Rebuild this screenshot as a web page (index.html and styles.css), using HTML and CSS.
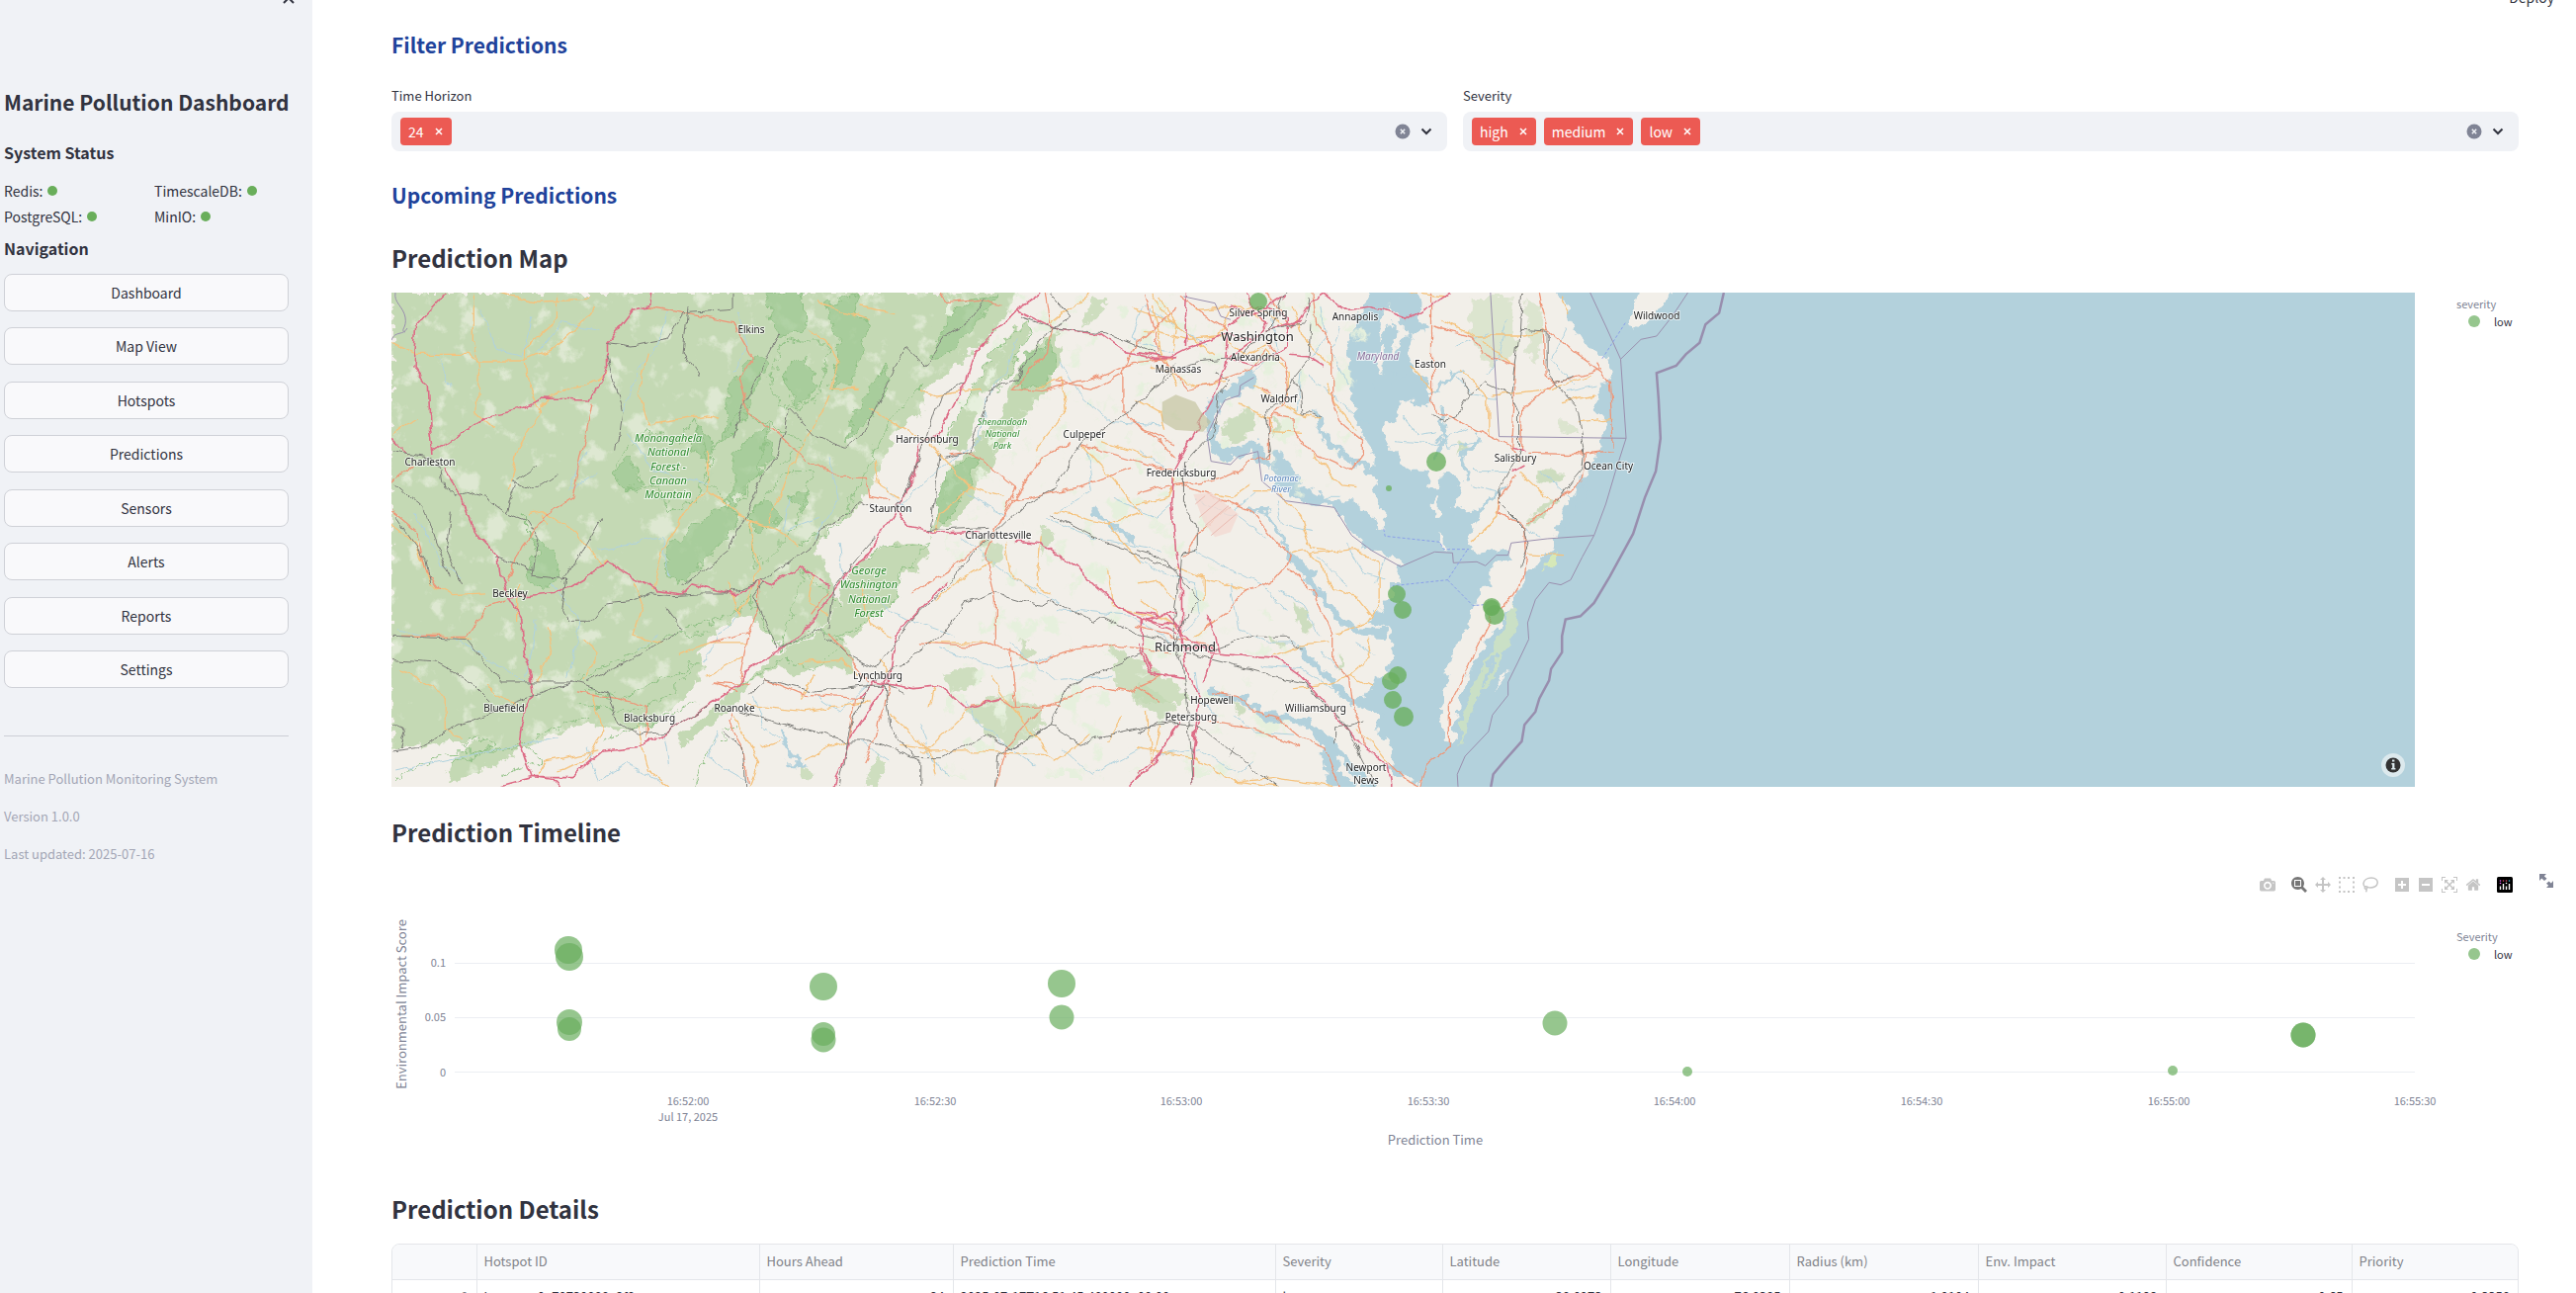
FILE: index.html
```html
<!DOCTYPE html>
<html lang="en">
<head>
<meta charset="utf-8">
<title>Marine Pollution Dashboard</title>
<link rel="stylesheet" href="styles.css">
</head>
<body>
<div class="app">
  <aside class="sidebar">
    <button class="close" aria-label="Close sidebar"><svg viewBox="0 0 12 12" width="12" height="12"><path d="M1 1l10 10M11 1L1 11"/></svg></button>
    <h1>Marine Pollution Dashboard</h1>
    <h2>System Status</h2>
    <div class="status">
      <span>Redis:<i class="dot"></i></span><span>TimescaleDB:<i class="dot"></i></span>
      <span>PostgreSQL:<i class="dot"></i></span><span>MinIO:<i class="dot"></i></span>
    </div>
    <h2 class="nav-title">Navigation</h2>
    <nav class="nav">
      <button>Dashboard</button>
      <button>Map View</button>
      <button>Hotspots</button>
      <button>Predictions</button>
      <button>Sensors</button>
      <button>Alerts</button>
      <button>Reports</button>
      <button>Settings</button>
    </nav>
    <hr>
    <footer class="about">
      <p>Marine Pollution Monitoring System</p>
      <p>Version 1.0.0</p>
      <p>Last updated: 2025-07-16</p>
    </footer>
  </aside>

  <main class="main">
    <button class="deploy">Deploy</button>
    <h3 class="section">Filter Predictions</h3>
    <div class="filters">
      <div class="field">
        <label for="horizon">Time Horizon</label>
        <div class="select">
          <span class="tag">24<button aria-label="Remove 24"><svg viewBox="0 0 8 8" width="8" height="8"><path d="M1 1l6 6M7 1L1 7"/></svg></button></span>
          <input id="horizon" type="text">
          <button class="clear" aria-label="Clear all"><svg viewBox="0 0 16 16" width="16" height="16"><circle cx="8" cy="8" r="7.5"/><path d="M5.8 5.8l4.4 4.4M10.2 5.8l-4.4 4.4"/></svg></button>
          <button class="open" aria-label="Open"><svg viewBox="0 0 12 8" width="12" height="8"><path d="M1.500 1.500l4.500 4.500 4.500-4.500"/></svg></button>
        </div>
      </div>
      <div class="field">
        <label for="severity">Severity</label>
        <div class="select">
          <span class="tag">high<button aria-label="Remove high"><svg viewBox="0 0 8 8" width="8" height="8"><path d="M1 1l6 6M7 1L1 7"/></svg></button></span>
          <span class="tag">medium<button aria-label="Remove medium"><svg viewBox="0 0 8 8" width="8" height="8"><path d="M1 1l6 6M7 1L1 7"/></svg></button></span>
          <span class="tag">low<button aria-label="Remove low"><svg viewBox="0 0 8 8" width="8" height="8"><path d="M1 1l6 6M7 1L1 7"/></svg></button></span>
          <input id="severity" type="text">
          <button class="clear" aria-label="Clear all"><svg viewBox="0 0 16 16" width="16" height="16"><circle cx="8" cy="8" r="7.5"/><path d="M5.8 5.8l4.4 4.4M10.2 5.8l-4.4 4.4"/></svg></button>
          <button class="open" aria-label="Open"><svg viewBox="0 0 12 8" width="12" height="8"><path d="M1.500 1.500l4.500 4.500 4.500-4.500"/></svg></button>
        </div>
      </div>
    </div>
    <h3 class="section upcoming">Upcoming Predictions</h3>

    <h2 class="title">Prediction Map</h2>
    <div class="map-row">
      <div class="map">
        <svg viewBox="0 0 2047 500" width="100%" height="500" preserveAspectRatio="xMinYMin slice">
          <defs>
            <filter id="rough" x="0" y="0" width="100%" height="100%"><feTurbulence type="fractalNoise" baseFrequency=".09" numOctaves="3" seed="4"/><feDisplacementMap in="SourceGraphic" scale="16" xChannelSelector="R" yChannelSelector="G"/></filter>
            <filter id="wiggle" x="0" y="0" width="100%" height="100%"><feTurbulence type="fractalNoise" baseFrequency=".06" numOctaves="3" seed="9"/><feDisplacementMap in="SourceGraphic" scale="9" xChannelSelector="R" yChannelSelector="G"/></filter>
            <filter id="speck" x="0" y="0" width="100%" height="100%"><feTurbulence type="fractalNoise" baseFrequency=".021 .013" numOctaves="6" seed="31"/><feColorMatrix values="0 0 0 0 .93  0 0 0 0 .94  0 0 0 0 .86  7 0 0 0 -4.1"/></filter>
            <filter id="woods" x="0" y="0" width="100%" height="100%"><feTurbulence type="fractalNoise" baseFrequency=".04 .04" numOctaves="5" seed="12"/><feColorMatrix values="0 0 0 0 .79  0 0 0 0 .87  0 0 0 0 .72  9 0 0 0 -5.6"/></filter>
            <path id="forestShape" d="M12 18H1250L1235 80 1190 160 1120 250 1070 310 1062 390 1015 425 1000 480 975 560 955 620 940 660 920 700 880 730 850 785 875 850 885 900 900 960 870 1030 790 1100 740 1030 715 990 650 1050 620 1110 635 1150 605 1230 560 1290 500 1345 430 1330 380 1330 300 1385 240 1430 160 1490 120 1500 130 1440 180 1380 120 1380 60 1400 12 1400Z"/>
            <clipPath id="forestClip"><use href="#forestShape"/></clipPath>
          </defs>
          <rect width="2047" height="500" fill="#b3d1dc"/>
          <g filter="url(#rough)">
            <rect x="-20" y="-20" width="860" height="540" fill="#f2efe9"/>
            <g transform="translate(754 -6) scale(.3954 .3333)" fill="#f2efe9">
              <path d="M-40-20H600L600 18 570 60 560 100 562 130 545 165 540 200 545 260 550 340 555 400 575 440 605 490 600 540 595 570 610 580 608 620 618 660 638 700 632 745 600 700 560 660 480 640 420 600 400 550 370 510 345 500 350 600 420 655 505 670 545 740 590 790 640 810 675 850 670 900 650 900 650 940 620 990 590 1020 650 1040 652 1060 655 1130 640 1160 650 1205 610 1180 600 1230 560 1250 610 1290 620 1350 655 1400 650 1470 720 1510 740 1560-40 1560Z"/>
              <path d="M640 60L665 80 690 150 655 200 660 100 620 170 625 100ZM605 220L635 180 630 270Z"/>
              <path d="M725-20L720 90 755 130 700 150 690 190 700 240 745 280 758 330 745 355 700 350 675 345 665 390 635 430 640 480 670 520 700 560 735 560 755 610 775 610 785 565 805 560 835 590 820 640 810 665 840 685 880 680 860 740 850 790 880 812 930 800 960 800 950 830 910 835 900 900 865 950 850 1030 820 1080 800 1150 785 1230 780 1300 788 1370 808 1400 815 1330 822 1260 860 1150 910 1050 950 990 975 930 1000 880 1040 820 1060 790 1080 730 1100 660 1130 600 1160 540 1190 480 1205 420 1170 370 1190 290 1215 280 1210 220 1150 180 1110 110 1095 50 1050-20Z"/>
              <path d="M1290-20H1380L1370 18 1330 80 1280 125 1260 120 1275 60Z"/>
              <path d="M762 640l10 0 3 60-10-5zM930 1180l-20 60 35-70zM770 750l15 10 3 50-14-16z"/>
              <path d="M960 960L972 1010 962 1060 900 1210 880 1230 930 1100 905 1130 850 1330 828 1390 830 1310 870 1190 940 1040Z" fill="#cfe4c0" opacity=".8"/>
              <path d="M1060 820L1080 800 1070 850 1040 850Z" fill="#d6e8b8"/>
            </g>
            <g transform="translate(-6 -6) scale(.5102 .3333)" fill="#c4d9b4">
              <use href="#forestShape"/>
              <path d="M1265 100L1280 130 1240 260 1180 330 1150 500 1105 500 1130 400 1160 320 1190 230ZM1330 130L1340 200 1320 300 1270 390 1240 440 1200 540 1170 620 1140 700 1080 755 1100 640 1110 560 1160 500 1230 360 1250 260 1280 200ZM1070 780L1080 810 1050 860 1020 880 1010 960 960 1010 930 1060 900 1070 870 1040 900 960 905 900 970 800 1020 775ZM870 1040L910 1070 930 1170 870 1150 810 1180 780 1160 720 1200 700 1260 640 1330 590 1395 580 1360 620 1320 700 1210 780 1110Z"/>
              <path d="M1160 1150L1190 1200 1120 1230 1110 1180ZM1240 1230L1300 1280 1310 1330 1240 1400 1190 1360 1150 1280 1200 1250ZM1440 1090L1510 1150 1560 1200 1600 1260 1500 1260 1450 1210ZM1260 1070L1290 1110 1270 1140ZM1180 760L1230 790 1220 850 1190 840ZM1300 720L1330 740 1300 820ZM1400 30L1430 50 1380 130ZM975 1420L990 1440 980 1518 950 1518ZM820 1440L850 1480 830 1500Z" opacity=".8"/>
            </g>
            <g transform="translate(754 -6) scale(.3954 .3333)" fill="#c4d9b4" opacity=".8">
              <path d="M210 430L290 370 300 430 240 480ZM350 400L370 420 350 460ZM400 960L430 980 450 1040 420 1050ZM1020 560L1090 560 1080 595 1030 590ZM0 1200L60 1230 100 1280 60 1310 0 1260ZM250 1260L280 1280 260 1310ZM340 1060L390 1080 370 1110ZM510 1120L530 1140 515 1160ZM830 470L850 490 820 510ZM1000 700L1080 640 1070 670 1000 730Z"/>
              <path d="M860 30L960 30 970 200 900 240 850 140ZM990 40L1040 60 1030 240 1000 200ZM1080 390L1130 440 1090 450Z" opacity=".6"/>
            </g>
            <rect x="560" width="740" height="490" filter="url(#woods)" clip-path="polygon(0 0,62% 0,55% 35%,50% 45%,40% 30%,35% 45%,48% 75%,46% 100%,0 100%)"/>
            <g transform="translate(754 -6) scale(.3954 .3333)" class="river">
              <path d="M330 540C300 500 310 480 300 480S250 520 215 500 190 430 190 380 240 330 300 270" stroke-width="10"/>
              <path d="M630 1050L560 1045 500 980 450 900 390 810" stroke-width="8"/>
              <path d="M390 810L360 740 340 690 280 665" stroke-width="4"/>
              <path d="M620 1290L540 1250 480 1180 420 1100" stroke-width="7"/>
              <path d="M600 1518L520 1420 480 1370 430 1320 390 1310 340 1310 280 1260 200 1230" stroke-width="8"/>
              <path d="M600 560L540 520 480 460 460 380" stroke-width="6"/>
              <path d="M540 1518L500 1480 490 1380" stroke-width="14"/>
              <path d="M850 590L830 520 870 460M760 330L800 280 830 260M780 380L790 450 760 520M950 600L900 640 870 700M1200 500L1130 660 1060 800" stroke-width="4"/>
              <path d="M650 300L610 300M700 280L650 250" stroke-width="5"/>
            </g>
            <g transform="translate(-6 -6) scale(.5102 .3333)" class="river">
              <path d="M780 1350L800 1400 830 1450 800 1450M1400 680L1450 730 1480 770" stroke-width="4"/>
            </g>
          </g>
          <g transform="translate(-6 -6) scale(.5102 .3333)" clip-path="url(#forestClip)"><rect x="0" y="0" width="1300" height="1518" filter="url(#speck)" opacity=".5"/></g>

          <g filter="url(#rough)">
            <g transform="translate(-6 -6) scale(.5102 .3333)" class="park">
              <path class="parkfill" d="M755 18L830 18 835 120 790 150 760 100ZM870 60L940 20 930 90 960 100 930 280 885 310 900 160ZM740 200L760 240 720 340 700 440 670 460 680 300ZM1160 40L1210 30 1180 100 1110 210 1080 220 1120 90ZM990 240L1000 300 950 420 915 470 930 380ZM560 790L620 720 690 640 700 720 640 820 590 900 555 870ZM1270 210L1320 170 1330 260 1290 310 1250 300ZM1110 560L1170 520 1160 600 1110 720 1090 700ZM270 690L290 760 330 800 350 880 310 920 280 880 300 800ZM620 420L650 480 640 520 610 500ZM450 570L480 520 510 600 480 620ZM690 500L750 420 770 520 720 600 690 650ZM790 260L830 210 860 300 810 370ZM720 700L750 640 790 700 740 740ZM800 640L840 620 830 680Z"/>
              <path d="M640 520L700 380 760 420 740 560 690 680 640 600ZM470 500L450 570 480 620 540 600 560 680 620 640 640 540 610 400 580 470 520 440ZM790 160L880 180 860 330 800 380 760 300ZM720 700L800 560 850 560 810 740 730 860ZM760 420L830 470 790 540M820 780L900 730 1000 400 1062 300M1100 480L1190 230 1270 100 1280 140 1210 330M900 900L980 790 1080 780 1020 880 1010 960 900 1070M590 1040L700 990 720 940 780 1100 860 1040 910 1080M380 1190L560 1060 640 1050M400 1220L470 1250 620 1140 560 1240 480 1290 380 1270M20 1490L120 1420 250 1400 400 1300M130 1440L220 1410 290 1400 310 1440 230 1480M150 1390L200 1370 220 1390 180 1420ZM700 1210L800 1130 850 1170 900 1090M780 1100L830 860 900 960M430 1380L560 1300 620 1260M610 1518L640 1400 690 1330"/>
            </g>
          </g>

          <g filter="url(#wiggle)">
            <g transform="translate(-6 -6) scale(.5102 .3333)" class="stream">
              <path d="M190 70L220 190 270 210 290 90M560 70L540 180 500 250M100 200L130 300M700 80L720 180 690 260M420 130L350 110 300 200M60 690L110 840 150 880M400 500L360 620 420 560M480 440L530 560 640 600M500 260L470 380M130 1060L280 1200 300 1010M330 900L390 1020 360 1180M420 800L550 760 560 880M700 990L650 1080 630 1140M800 640L790 740 860 700M880 520L900 640 850 760M1250 160L1230 260 1190 340 1180 460 1060 600 1010 680M1340 230L1380 330 1440 410 1540 420M1390 500L1400 620 1340 680M1500 60L1480 160 1560 200M990 600L1040 690M1140 620L1230 700M1310 700L1400 760 1540 800M900 780L910 900M960 940L1020 1000 1130 1060M1140 760L1240 880 1340 960M1330 980L1480 1000 1560 1080M1100 1100L1220 1160 1320 1120M1240 1080L1330 1200 1440 1180M730 1240L750 1340 800 1390M850 1240L900 1290 960 1200M400 1400L420 1500 480 1450 540 1500M550 1360L560 1450M1060 1330L1080 1440 1120 1480M1150 1260L1180 1330 1290 1460M1340 1400L1400 1480 1500 1400M660 1350L640 1430 720 1500M940 1380L1000 1440M20 1470L140 1430 240 1400 340 1370M20 1040L80 1060M500 1100L540 1060M1440 640L1530 700 1560 660"/>
            </g>
            <g transform="translate(754 -6) scale(.3954 .3333)" class="stream">
              <path d="M20 60L100 120 180 180M340 60L360 190 300 260M470 60L480 160 440 220M420 260L410 380M440 270L530 360 590 420M520 120L500 200 540 300M680 390L720 450 760 440M660 470L760 480 840 430M780 410L800 490 880 470M860 560L950 560M850 600L920 620M800 250L860 330 920 340M950 100L930 200 890 270M1100 130L1060 220 1120 300M1180 300L1100 320M820 180L900 140M150 650L260 700 330 760M10 830L70 870 150 900 160 1000 90 1080M140 800L240 860 320 900 380 980M240 900L260 1040 340 1080 410 1080M360 920L420 960 470 1060M320 1150L420 1160 500 1220M150 1170L160 1260 210 1300M60 1420L160 1400 260 1480 300 1440M250 1300L300 1350 400 1360M470 1110L540 1180M560 1080L610 1120M440 640L520 640M360 650L370 720 450 740M540 780L580 870 640 890M460 820L540 910M1030 560L1110 640M960 700L1030 760M640 820L610 900M10 500L80 560M250 680L310 620"/>
            </g>
            <g transform="translate(-6 -6) scale(.5102 .3333)" fill="none">
              <path class="minor" d="M175 18L175 160 185 260 180 380 215 430M340 18L340 100 275 190 280 280 305 380 260 500 245 620M12 170L60 205 165 205 180 225 275 225 330 190 390 110 415 60M220 18L300 45 410 40M12 450L60 400M300 380L340 320 410 290 440 260M520 200L500 330 520 420 640 390 660 400M640 500L640 620 590 690 550 800 530 920M280 690L310 680 380 750 430 850 440 830M310 690L320 720M12 720L60 780 90 900 130 935 200 930M30 1060L120 1060 170 1070M390 1070L420 1110 390 1200M490 890L510 960 490 1060 550 1080M320 1030L330 1100 300 1200M260 900L260 1020M640 620L720 710 780 740 820 780M720 710L740 860 700 1000 680 900M840 130L870 160 900 230 880 310 940 310M880 330L810 540 800 560 760 720M960 100L870 60 860 40M940 60L1010 80M1060 310L1090 330 1180 310M960 370L1020 430 1090 470M1080 480L1160 610 1230 640M1020 640L980 600 970 520M1290 310L1340 280 1350 380 1290 490M1160 610L1100 690 1090 750M1420 470L1520 520M1380 480L1440 580 1500 690 1430 720M1330 680L1430 720 1500 840M1300 760L1290 910 1320 930M1230 770L1240 870 1290 930M1430 860L1440 970 1520 1000M1200 830L1130 900 1090 950M940 900L960 1020 1000 1060M850 870L840 960 880 1000M720 1080L640 1080 580 1120M640 1180L710 1120M820 1140L900 1130 940 1180M980 1130L1000 1180M850 1180L820 1250M720 1270L830 1290 960 1260M690 1300L740 1440 720 1518M780 1380L740 1400M410 1230L430 1350 400 1440 340 1470M1060 1410L1180 1410 1300 1420 1330 1440 1400 1360M1000 1300L1080 1410 1090 1480M1160 1280L1080 1400 1020 1390M1200 1180L1230 1250 1290 1370 1310 1420M1460 1300L1430 1380M1510 1290L1520 1450M920 1370L830 1440M300 1490L320 1440 420 1410M500 1330L520 1470 560 1518M1400 18L1360 60 1320 110M1480 60L1560 110M1520 60L1540 200 1568 300M1090 1210L1080 1280M1200 1080L1080 1080M30 1160L120 1240 120 1350 150 1370M200 1210L260 1270"/>
              <path class="second" d="M520 60L590 80 690 110 720 190 730 220 700 280 720 380 780 450 830 520 900 580 955 580 960 640 1000 650M1100 18L1110 50 1180 40 1220 60M410 350L390 500 370 640 320 690 270 790 240 900M12 590L50 540M12 680L60 740 80 860 110 920M1568 60L1490 170 1460 260 1460 380 1500 430 1568 480M1310 18L1320 130 1310 200 1240 310 1300 320 1400 280 1480 230 1560 220M1330 290L1400 310 1460 260M1120 510L1160 500 1250 610 1210 740 1190 820 1210 950 1210 1090M1360 470L1300 520 1240 660 1210 740M1380 480L1560 560M1240 650L1370 610 1480 550M1040 930L1120 860 1190 770M880 920L840 1000M700 1200L720 1050 740 980 740 900M640 1080L720 1050M1000 1210L970 1380 950 1440M960 1200L900 1090 880 1050M700 1230L650 1200 720 1210M380 1230L460 1250 520 1280 520 1370M750 1190L830 1240 950 1250M30 1060L160 1060 200 970 240 950M1060 1080L1170 1090 1200 1080 1290 1140 1370 1100 1450 1090 1560 1110M1160 1270L1220 1250 1250 1280 1340 1270M1410 1210L1470 1230 1540 1180M1210 1518L1230 1400 1300 1280 1410 1210M1250 1280L1240 1100M720 1500L710 1400 680 1320 690 1280M920 1370L930 1250"/>
              <path class="motor" d="M120 18L60 120 55 240 85 300 88 420 96 510M96 500L200 395 260 375 310 342 405 345 440 250 440 170 490 70 520 60 525 18M115 550L150 640 160 680 180 750 225 820 230 880 245 950 270 1010 275 1120 290 1180 295 1240 275 1290 265 1380 290 1490 340 1500 350 1518M220 1518L290 1490 370 1490 430 1410 500 1400 560 1350 640 1270 700 1210 710 1170 780 1110 850 1010 890 920 920 860 950 830 1010 680 1050 570 1060 480 1100 440 1150 290 1170 200 1250 70 1300 18M245 945L350 925 440 840 540 920 590 930 610 900 690 935 740 895 765 910 820 850 880 910M1010 680L1040 730 1090 750 1180 745M1250 770L1300 780 1370 850 1450 970 1568 1050M1250 70L1330 130 1420 145 1470 200 1530 220 1568 215M1000 1200L1010 1060 1110 900M940 1250L970 1200 1050 1220 1100 1210 1150 1280 1220 1250M890 1518L920 1370 1000 1180M1568 1330L1530 1440 1470 1518M1500 1000L1500 1100 1520 1180 1568 1180M1500 1010L1568 990M12 460L45 510"/>
              <path class="rail" d="M12 500L90 520 110 560 115 610 140 640 160 625 200 640 240 685 280 710 300 760 290 880 360 890 350 980 360 1015 410 1015 440 960 500 950 530 930 570 935 620 930 680 930 750 890 850 780 860 740 920 690 940 650 960 660M240 680L260 590 300 550M250 590L290 620 340 570M20 600L80 680 100 780 130 880M20 700L80 830 90 900M130 680L120 800 150 900M12 1130L100 1140 170 1200 210 1260M12 1060L160 1070 230 1200 330 1200 370 1200M12 1410L60 1400 150 1330 260 1260 370 1200 440 1230 460 1320 500 1360 560 1350 640 1270M220 820L290 860M430 700L400 780 350 900M600 60L590 200 620 270M440 170L490 180 560 160 590 80 690 70 690 18M440 210L470 380 460 500M780 140L740 260 700 400 690 460M800 370L850 450 910 490 950 440 1000 280 1030 180 1070 240 1110 150 1160 100 1190 40M590 910L680 800 710 700 740 600 780 500 800 370M750 900L730 940 780 1100 860 1040 910 1110 970 1160 1050 1000 1120 900 1170 800 1210 750 1270 660 1330 610 1380 470 1470 380 1540 290 1568 230M560 980L590 1040 500 1120 400 1200M1010 680L1050 560 1070 470 1100 330 1150 290M1100 510L1080 740M970 760L890 910 880 1030M1070 740L1200 730M1320 690L1420 770 1568 860M970 1200L1100 1060 1150 960 1210 930 1300 970 1320 950 1400 1020 1420 1000 1500 1060 1568 1080M720 1240L750 1190 850 1230 960 1210 1000 1210 1030 1240M960 1210L920 1340 900 1518M990 1210L1000 1340 1050 1430 1100 1430 1190 1360 1240 1400 1320 1330 1380 1390 1420 1365 1520 1330 1568 1325M700 1290L720 1300 850 1350 920 1380 960 1380 1000 1400 1060 1440 1060 1518M1210 1518L1215 1420 1320 1330 1350 1220 1440 1150 1500 1110M670 1350L710 1400 715 1518M1320 18L1360 90 1310 140 1250 280 1200 310 1160 500 1110 520M1260 90L1330 130 1430 140 1540 210M12 1330L40 1350 30 1400"/>
            </g>
            <g transform="translate(754 -6) scale(.3954 .3333)" fill="none">
              <path class="minor" d="M60 30L100 120 90 200M20 130L130 160 230 150M40 240L150 300 230 290M150 70L260 60 330 110M400 60L420 150 500 240M300 300L410 380 470 400M260 350L340 400 350 440 420 445M330 190L390 260 390 330M480 290L510 360 560 430M450 510L520 600 570 605M0 660L80 640 100 580M200 630L240 640 290 600M300 620L360 620 420 700 445 790 520 805 560 800 620 840 620 960 590 1020 510 1050M390 810L430 800 480 860 500 920 560 940 600 1000M0 900L50 890 100 950M170 890L280 920M440 810L520 800M350 1120L410 1090 490 1080M590 1070L600 1130 550 1180 600 1210M10 950L60 1000 120 1050M200 1010L150 1060M0 1400L140 1430 250 1500 360 1518M250 1500L350 1490 510 1518M60 1330L40 1450M400 1220L480 1210 550 1180M560 1340L600 1380 640 1440M700 20L790 30M780 100L870 150 990 150 1050 130M910 330L1060 310 1160 270M1090 350L1170 330M1130 410L1220 400M980 560L1060 650M850 780L920 700 930 640M1000 810L1090 815M1090 30L1110 80M830 250L900 340 900 450M700 240L760 320M880 160L960 240M40 18L80 100 200 210M100 850L170 880 170 950M0 340L60 380 70 440M380 120L300 60 240 90M340 170L280 210 210 150 240 70"/>
              <path class="second" d="M110 30L190 100 230 130M450 18L460 120 500 180 500 340 520 410 580 470 580 510 550 560 440 500 400 440 400 400 350 390M755 20L755 330 765 380 810 400 880 440 950 480 980 530M760 120L860 150 880 200 970 245M970 240L960 500M1030 18L1050 130 1120 200 1190 260 1210 290 1220 500 1150 510 1000 505M1040 130L1045 270 1070 290 1190 250M1070 290L990 370 985 500M970 570L930 640 925 690 990 720 995 820 990 880 960 940 910 1000 870 1090 850 1150 800 1270 800 1400 740 1450 725 1518M1000 720L1060 670 1075 640 1140 590 1150 510M0 420L60 470 100 520M110 600L180 630 290 680 390 820 380 850 350 890 280 920 240 980 170 1040M390 850L450 920 500 1050 500 1130 545 1190 555 1290 575 1350 580 1400M0 1210L60 1260M190 1230L260 1240 300 1290 360 1310 420 1370 480 1400 520 1518M180 1320L300 1340 420 1400M240 670L160 740 120 820M0 630L50 610 110 600 190 590 260 560 290 530 340 520 340 400 390 330 380 230 330 170M50 200L130 310 200 290 290 250 330 190M320 310L340 320M20 30L60 200M330 18L400 120M0 1030L90 1060 200 1100M1190 250L1180 230M640 1440L690 1500 720 1518"/>
              <path class="motor" d="M0 200L80 215 130 185 240 140 300 160 330 110 300 80 280 18M130 18L125 180M240 60L300 90 380 30M230 130L225 215 300 240 390 180 390 90 310 60 230 120M400 120L440 50 480 18 540 70 600 60 690 100 760 50 800 18M390 205L440 210 480 240M300 160L230 220 200 330 130 480 95 560 90 660 100 800 115 900 115 1080 130 1170 160 1250 145 1400 145 1518M0 985L80 1000 120 1060 180 1110 360 1130 420 1180 510 1300 570 1390 640 1450 650 1518M0 1080L30 1170 120 1190M20 1010L110 1030 120 1100M120 1100L200 1100 170 1200M110 1320L60 1420 0 1480M160 1320L140 1420M180 1000L200 1050 210 1110M960 490L990 500M960 560L990 540M420 100L400 110 330 130"/>
              <path class="rail" d="M0 350L60 300 120 240 140 230 260 215 300 170 350 110 380 18M200 260L240 290 210 330 205 400 190 450 150 500 120 540 120 650 155 730 155 800 115 810 110 900 90 1050 120 1150 125 1210 135 1330 145 1518M0 1350L60 1320 150 1330 360 1518M120 1110L220 1140 340 1180 430 1200 480 1270 520 1300 580 1440 610 1518M330 130L430 110 440 30M445 110L440 220 400 280 420 320 425 385 440 380 470 395M400 280L380 340 330 380 345 500 330 520M985 18L980 130 1050 135 1050 260 1130 380 1145 500 1140 550 1070 650M980 130L960 330 980 380 980 500 925 620 930 660 990 730 1000 790 980 850M830 280L850 330 890 290 960 330M850 330L815 400 785 410 755 385M1070 290L1120 270M0 800L60 820 100 870 160 950 120 1010 100 1070M200 1100L290 1060 380 1060 420 1100M510 1390L510 1340 580 1320M240 1420L245 1400"/>
            </g>
          </g>

          <g transform="translate(754 -6) scale(.3954 .3333)" fill="none">
            <path d="M65 350L100 328 150 350 165 380 190 410 170 440 100 435 65 410Z" fill="#bdbd94" opacity=".6"/>
            <path d="M145 630L190 625 260 690 240 745 200 760 170 710Z" fill="#f3d9d2" opacity=".8"/>
            <path d="M150 660l25-25M160 700l55-55M175 725l60-60M190 755l65-65" stroke="#e9b9b0" class="fine"/>
            <path class="border-thin" d="M1160 18L1200 120 1238 220 1252 460 1225 560 1200 660 1170 755 1140 820 1110 890 1085 905 1055 898 1020 950 1000 1020 1003 1070 975 1140 950 1200 950 1240 910 1300 900 1350 840 1425 820 1480 822 1518M1238 220L1290 160 1330 150 1370 90 1410 18M905 18L927 455 1252 460M675 850L762 805 808 808 810 838 870 835 892 847 920 815 950 815 958 778 1050 765 1170 755M300 275L265 300 262 330 225 345 200 400 180 450 190 530 240 540 260 515 310 500 320 590 380 650 505 670 550 755 600 800 675 850M120 30L200 50 215 90 240 100"/>
            <path class="border-thick" d="M1502 18L1490 80 1455 115 1440 170 1405 205 1380 240 1330 262 1335 340 1340 460 1328 560 1300 640 1270 750 1210 880 1170 960 1135 1000 1097 1010 1088 1060 1088 1110 1060 1160 1055 1195 1030 1250 1020 1290 992 1330 985 1380 940 1440 912 1480 906 1518"/>
            <path class="ferry" d="M632 735L635 757 775 775 785 797 850 797M845 800L795 890 655 908M795 890L860 968 890 965M1250 110L1190 220"/>
          </g>
          <path class="border-thin" d="M4 0C2 10 12 14 14 25S8 38 14 40M0 48C4 38 12 44 16 36"/>

          <g class="label">
            <text x="364" y="41">Elkins</text><text x="39" y="175">Charleston</text><text x="120" y="308">Beckley</text>
            <text x="114" y="424">Bluefield</text><text x="261" y="434">Blacksburg</text><text x="347" y="424">Roanoke</text>
            <text x="492" y="391">Lynchburg</text><text x="542" y="152">Harrisonburg</text><text x="505" y="222">Staunton</text>
            <text x="614" y="249">Charlottesville</text><text x="701" y="147">Culpeper</text><text x="796" y="81">Manassas</text>
            <text x="877" y="24">Silver Spring</text><text x="874" y="69">Alexandria</text><text x="898" y="111">Waldorf</text>
            <text x="975" y="28">Annapolis</text><text x="1051" y="76">Easton</text><text x="799" y="186">Fredericksburg</text>
            <text x="1137" y="171">Salisbury</text><text x="1231" y="179">Ocean City</text><text x="1280" y="27">Wildwood</text>
            <text x="830" y="416">Hopewell</text><text x="809" y="433">Petersburg</text><text x="935" y="424">Williamsburg</text>
            <text x="986" y="484">Newport</text><text x="986" y="497">News</text>
            <g class="city"><text x="876" y="49">Washington</text><text x="803" y="363">Richmond</text></g>
            <g class="state"><text x="998" y="68">Maryland</text></g>
            <g class="water"><text x="900" y="191">Potomac</text><text x="900" y="202">River</text></g>
            <g class="forest"><text x="280" y="151">Monongahela</text><text x="280" y="165">National</text><text x="280" y="180">Forest -</text><text x="280" y="194">Canaan</text><text x="280" y="208">Mountain</text>
            <text x="483" y="285">George</text><text x="483" y="299">Washington</text><text x="483" y="314">National</text><text x="483" y="328">Forest</text></g>
            <g class="forest small"><text x="618" y="134">Shenandoah</text><text x="618" y="146">National</text><text x="618" y="158">Park</text></g>
          </g>
          <g class="spot">
            <circle cx="877" cy="9" r="9"/><circle cx="1057" cy="171" r="10"/><circle cx="1009" cy="198" r="3"/>
            <circle cx="1017" cy="305" r="9"/><circle cx="1023" cy="321" r="9"/><circle cx="1113" cy="318" r="9"/><circle cx="1113" cy="319" r="8"/><circle cx="1116" cy="326" r="10"/>
            <circle cx="1018" cy="387" r="9"/><circle cx="1011" cy="393" r="9"/><circle cx="1013" cy="412" r="9"/><circle cx="1024" cy="429" r="10"/>
          </g>
        </svg>
        <button class="info" aria-label="Map attribution"><svg viewBox="0 0 24 24" width="24" height="24"><circle cx="12" cy="12" r="7.5" fill="#333"/><path d="M11 6.5h2.4v2H11zM10.400 10h3v5h1v1.400h-4.200V15h1v-3.600h-.8z" fill="#dce9ed"/></svg></button>
      </div>
      <div class="legend">
        <div class="legend-title">severity</div>
        <div class="legend-item"><i></i>low</div>
      </div>
    </div>

    <h2 class="title timeline">Prediction Timeline</h2>
    <div class="chart">
      <svg class="plot" viewBox="0 0 2152 314" width="100%">
        <path class="grid" d="M64 94.500H2047M64 149.500H2047M64 204.500H2047"/>
        <g class="spot light">
          <circle cx="179" cy="81" r="14"/><circle cx="180" cy="88" r="14"/><circle cx="180" cy="154" r="13"/><circle cx="180" cy="161" r="12"/>
          <circle cx="437" cy="118" r="14"/><circle cx="437" cy="166" r="12"/><circle cx="437" cy="172" r="12.500"/>
          <circle cx="678" cy="115" r="14"/><circle cx="678" cy="149" r="12.500"/><circle cx="1177" cy="155" r="12.500"/>
          <circle cx="1311" cy="204" r="5"/><circle cx="1802" cy="203" r="5"/><circle cx="1934" cy="167" r="12.500"/><circle cx="1934" cy="167" r="12.500"/>
        </g>
        <g class="tick end"><text x="55" y="98">0.1</text><text x="55" y="153">0.05</text><text x="55" y="209">0</text></g>
        <g class="tick">
          <text x="300" y="238">16:52:00</text><text x="300" y="254">Jul 17, 2025</text><text x="550" y="238">16:52:30</text><text x="799" y="238">16:53:00</text><text x="1049" y="238">16:53:30</text>
          <text x="1298" y="238">16:54:00</text><text x="1548" y="238">16:54:30</text><text x="1798" y="238">16:55:00</text><text x="2047" y="238">16:55:30</text>
        </g>
        <g class="axis"><text x="1056" y="278">Prediction Time</text><text transform="translate(15 136) rotate(-90)">Environmental Impact Score</text></g>
      </svg>
      <div class="legend chart-legend">
        <div class="legend-title">Severity</div>
        <div class="legend-item"><i></i>low</div>
      </div>
      <div class="modebar">
        <button aria-label="Download plot"><svg viewBox="0 0 1000 1000"><path transform="matrix(1 0 0 -1 0 850)" d="m500 450c-83 0-150-67-150-150 0-83 67-150 150-150 83 0 150 67 150 150 0 83-67 150-150 150z m400 150h-120c-16 0-34 13-39 29l-31 93c-6 15-23 28-40 28h-340c-16 0-34-13-39-28l-31-94c-6-15-23-28-40-28h-120c-55 0-100-45-100-100v-450c0-55 45-100 100-100h800c55 0 100 45 100 100v450c0 55-45 100-100 100z m-400-550c-138 0-250 112-250 250 0 138 112 250 250 250 138 0 250-112 250-250 0-138-112-250-250-250z m365 380c-19 0-35 16-35 35 0 19 16 35 35 35 19 0 35-16 35-35 0-19-16-35-35-35z"/></svg></button>
        <span class="gap"></span>
        <button class="on" aria-label="Zoom"><svg viewBox="0 0 1000 1000"><path transform="matrix(1 0 0 -1 0 850)" d="m1000-25l-250 251c40 63 63 138 63 218 0 224-182 406-407 406-224 0-406-182-406-406s183-406 407-406c80 0 155 22 218 62l250-250 125 125z m-812 250l0 438 437 0 0-438-437 0z m62 375l313 0 0-312-313 0 0 312z"/></svg></button>
        <button aria-label="Pan"><svg viewBox="0 0 1000 1000"><path transform="matrix(1 0 0 -1 0 850)" d="m1000 350l-187 188 0-125-250 0 0 250 125 0-188 187-187-187 125 0 0-250-250 0 0 125-188-188 186-187 0 125 252 0 0-250-125 0 187-188 188 188-125 0 0 250 250 0 0-126 187 188z"/></svg></button>
        <button aria-label="Box select"><svg viewBox="0 0 16 16"><path d="M0 0h2v2H0zM4.500 0h2v2h-2zM9 0h2v2H9zM14 0h2v2h-2zM0 14h2v2H0zM4.500 14h2v2h-2zM9 14h2v2H9zM14 14h2v2h-2zM0 4.500h2v2H0zM0 9.500h2v2H0zM14 4.500h2v2h-2zM14 9.500h2v2h-2z"/></svg></button>
        <button aria-label="Lasso select"><svg viewBox="0 0 16 16"><path class="stroke" d="M3.200 10.800C1.600 9.800.8 8.300 1 6.500 1.400 3.300 4.800 1 9 1s6.500 2.300 6.200 5.200C14.900 9.300 11.500 11 7.800 11 6 11 4.800 9.600 3.400 9.800 1.800 10.100 1.900 12.200 3.400 12.300 4.800 12.300 5 10.800 4.400 9.900M3.600 12.300C4.300 13 4.300 14 3.400 15.300"/></svg></button>
        <span class="gap"></span>
        <button aria-label="Zoom in"><svg viewBox="-62 0 1000 1000"><path transform="matrix(1 0 0 -1 0 850)" d="m1 787l0-875 875 0 0 875-875 0z m687-500l-187 0 0-187-125 0 0 187-188 0 0 125 188 0 0 187 125 0 0-187 187 0 0-125z"/></svg></button>
        <button aria-label="Zoom out"><svg viewBox="-62 0 1000 1000"><path transform="matrix(1 0 0 -1 0 850)" d="m0 788l0-876 876 0 0 876-876 0z m688-500l-500 0 0 125 500 0 0-125z"/></svg></button>
        <button aria-label="Autoscale"><svg viewBox="0 0 1000 1000"><path transform="matrix(1 0 0 -1 0 850)" d="m250 850l-187 0-63 0 0-62 0-188 63 0 0 188 187 0 0 62z m688 0l-188 0 0-62 188 0 0-188 62 0 0 188 0 62-62 0z m-875-938l0 188-63 0 0-188 0-62 63 0 187 0 0 62-187 0z m875 188l0-188-188 0 0-62 188 0 62 0 0 62 0 188-62 0z m-125 188l-1 0-93-94-156 156 156 156 92-93 2 0 0 250-250 0 0-2 93-92-156-156-156 156 94 92 0 2-250 0 0-250 0 0 93 93 157-156-157-156-93 94 0 0 0-250 250 0 0 0-94 93 156 157 156-157-93-93 0 0 250 0 0 250z"/></svg></button>
        <button aria-label="Reset axes"><svg viewBox="-36 0 1000 1000"><path transform="matrix(1 0 0 -1 0 850)" d="m786 296v-267q0-15-11-26t-25-10h-214v214h-143v-214h-214q-15 0-25 10t-11 26v267q0 1 0 2t0 2l321 264 321-264q1-1 1-4z m124 39l-34-41q-5-5-12-6h-2q-7 0-12 3l-386 322-386-322q-7-4-13-4-7 2-12 7l-35 41q-4 5-3 13t6 12l401 334q18 15 42 15t43-15l136-114v109q0 8 5 13t13 5h107q8 0 13-5t5-13v-227l122-102q5-5 6-12t-4-13z"/></svg></button>
        <span class="gap"></span>
        <a href="#plotly" aria-label="Plotly"><svg viewBox="0 0 16 16"><rect width="16" height="16" rx="1.500" fill="#000"/><path d="M3.500 9.500v3.500M6.500 7v6M9.500 9.500v3.500M12.500 7v6" stroke="#fff" stroke-width="1.400"/><g><circle cx="3.500" cy="4" r=".8" fill="#e763fa"/><circle cx="3.500" cy="6.500" r=".8" fill="#e763fa"/><circle cx="6.500" cy="4" r=".8" fill="#ef4f6f"/><circle cx="9.500" cy="4" r=".8" fill="#ef4f6f"/><circle cx="9.500" cy="6.500" r=".8" fill="#fff"/><circle cx="12.500" cy="4" r=".8" fill="#45c8ee"/></g></svg></a>
      </div>
      <button class="expand" aria-label="Fullscreen"><svg viewBox="0 0 14 14" width="14" height="14"><path d="M0 0h7L4.800 2.200 7.500 4.700 5 7 2.300 4.600 0 7zM14 14H7l2.200-2.200L7 9.800 9.600 7.500l2.200 2L14 7z"/></svg></button>
    </div>

    <h2 class="title details">Prediction Details</h2>
    <div class="table-wrap">
      <table>
        <colgroup><col class="c-idx"><col class="c-id"><col class="c-hours"><col class="c-time"><col class="c-sev"><col class="c-lat"><col class="c-lon"><col class="c-rad"><col class="c-env"><col class="c-conf"><col class="c-pri"></colgroup>
        <thead><tr><th></th><th>Hotspot ID</th><th>Hours Ahead</th><th>Prediction Time</th><th>Severity</th><th>Latitude</th><th>Longitude</th><th>Radius (km)</th><th>Env. Impact</th><th>Confidence</th><th>Priority</th></tr></thead>
        <tbody><tr><td class="num idx">0</td><td>hotspot_0_70730888_2f8</td><td class="num">24</td><td>2025-07-17T16:51:45.400000+00:00</td><td>low</td><td class="num">38.0973</td><td class="num">-76.0385</td><td class="num">1.9104</td><td class="num">0.1122</td><td class="num">0.65</td><td class="num">0.3358</td></tr></tbody>
      </table>
    </div>
  </main>
</div>
</body>
</html>
```
FILE: styles.css
```css
* { box-sizing: border-box; }
body { margin: 0; background: #fff; color: #31333f; font: 14px/24px "Noto Sans CJK SC", "Noto Sans", sans-serif; }
h1, h2, h3, p { margin: 0; font-weight: 600; }
button { font: inherit; color: inherit; border: 0; padding: 0; background: none; display: block; }
svg { display: block; }
.app { display: flex; height: 100vh; overflow: hidden; }

.sidebar { position: relative; flex: none; width: 316px; padding: 88px 24px 0 4px; background: #f0f2f6; }
.close { position: absolute; right: 18px; top: -8px; }
.close path { stroke: #31333f; stroke-width: 2; fill: none; }
.sidebar h1 { font-size: 21px; line-height: 30px; white-space: nowrap; }
.sidebar h2 { font-size: 16px; line-height: 24px; margin-top: 24px; }
.status { display: grid; grid-template-columns: 152px 1fr; line-height: 26px; margin-top: 14px; }
.status span { display: flex; align-items: center; gap: 5px; }
.dot { width: 10px; height: 10px; border-radius: 50%; background: #69ae5a; }
.sidebar .nav-title { margin-top: 7px; }
.nav { display: flex; flex-direction: column; justify-content: space-between; height: 419px; margin-top: 14px; }
.nav button { height: 38px; border: 1px solid #cfd1d7; border-radius: 8px; background: #f9f9fb; }
hr { border: 0; border-top: 1px solid #cccfd6; margin: 48px 0 0; }
.about { margin-top: 31px; display: grid; gap: 14px; }
.about p { font-size: 13px; font-weight: 400; color: #a3a6b5; }

.main { position: relative; flex: 1; min-width: 0; padding: 30px 58px 0 80px; }
.deploy { position: absolute; right: 22px; top: -13px; line-height: 20px; }
.section { font-size: 21px; line-height: 30px; color: #1f439b; }
.filters { display: grid; grid-template-columns: 1fr 1fr; gap: 16px; margin-top: 27px; }
.field label { display: block; font-size: 13px; line-height: 20px; margin-bottom: 6px; }
.select { display: flex; align-items: center; gap: 8px; height: 40px; border-radius: 8px; background: #f0f2f6; padding: 0 15px 0 9px; }
.tag { display: flex; align-items: center; gap: 11px; height: 28px; padding: 0 9px 0 8px; border-radius: 4px; background: #ec5a53; color: #fff; }
.tag path { stroke: #fff; stroke-width: 1.5; fill: none; }
.select input { flex: 1; min-width: 0; border: 0; background: none; outline: 0; font: inherit; }
.clear circle { fill: #808495; }
.clear path { stroke: #f0f2f6; stroke-width: 1.4; fill: none; }
.open { margin-left: 2px; }
.open path { stroke: #31333f; stroke-width: 2; fill: none; }
.upcoming { margin-top: 29px; }
.title { font-size: 24px; line-height: 34px; margin: 32px 0 18px; }
.title.timeline { margin: 29px 0 21px; }
.title.details { margin: 12px 0 18px; }

.map-row { display: flex; }
.map { position: relative; flex: 1; min-width: 0; height: 500px; overflow: hidden; }
.info { position: absolute; right: 10px; bottom: 10px; border-radius: 50%; background: #dce9ed; }
.legend { flex: none; width: 105px; padding: 2px 0 0 42px; font-size: 11px; line-height: 18px; white-space: nowrap; }
.legend-title { color: #808495; }
.legend-item { display: flex; align-items: center; gap: 14px; padding-left: 12px; color: #31333f; }
.legend i { width: 12px; height: 12px; border-radius: 50%; background: #96c68e; }

.river { fill: none; stroke: #b3d1dc; stroke-linecap: round; stroke-linejoin: round; }
.river path, .park path, .stream path, .minor, .second, .motor, .rail, .border-thin, .border-thick, .ferry, .fine { vector-effect: non-scaling-stroke; }
.park { fill: none; stroke: #8fc084; stroke-width: 1; }
.parkfill { fill: #9dc891; fill-opacity: .7; }
.stream { fill: none; stroke: #b0d2de; stroke-width: 1; }
.minor { stroke: #f5c27c; stroke-width: 1.3; }
.second { stroke: #ee9678; stroke-width: 1.3; }
.motor { stroke: #dd6c86; stroke-width: 1.6; }
.rail { stroke: #7c7c78; stroke-width: 1; }
.border-thin { fill: none; stroke: #9a8fae; stroke-width: 1; }
.border-thick { stroke: #988eae; stroke-width: 2.5; }
.ferry { stroke: #8a9fe8; stroke-width: 1; stroke-dasharray: 3 2; }
.label { font: 10px "Noto Sans", sans-serif; text-anchor: middle; fill: #222; stroke: #fff; stroke-opacity: .7; stroke-width: 2px; paint-order: stroke; }
.city { font-size: 13px; }
.state { font-style: italic; fill: #8a6f9a; }
.water { font-size: 9px; font-style: italic; fill: #5d86bd; }
.forest { font-size: 11px; font-style: italic; fill: #2c8a2c; }
.forest.small { font-size: 9px; }
.spot circle { fill: #69ae5e; fill-opacity: .78; }
.spot.light circle { fill-opacity: .7; }

.chart { position: relative; }
.grid { stroke: #eceef3; stroke-width: 1; fill: none; }
.tick { font-size: 11px; fill: #808495; text-anchor: middle; }
.tick.end { text-anchor: end; }
.axis { font-size: 13px; fill: #808495; text-anchor: middle; }
.chart-legend { position: absolute; right: 0; top: 56px; }
.modebar { position: absolute; right: 6px; top: 7px; display: flex; gap: 8px; fill: #c5c5c5; }
.modebar svg { width: 16px; height: 16px; }
.modebar .on { fill: #777; }
.modebar .stroke { fill: none; stroke: #c5c5c5; stroke-width: 1.5; }
.gap { width: 0; }
.expand { position: absolute; right: -35px; top: 4px; fill: #808495; }

.table-wrap { border: 1px solid #e4e6ea; border-radius: 8px 8px 0 0; overflow: hidden; }
table { width: 100%; table-layout: fixed; border-collapse: collapse; font-size: 13px; line-height: 20px; }
th, td { height: 35px; padding: 0 8px 0 7px; text-align: left; font-weight: 400; white-space: nowrap; border-right: 1px solid #e4e6ea; border-bottom: 1px solid #e4e6ea; }
th { background: #f8f9fb; color: #808288; }
th:last-child, td:last-child { border-right: 0; }
.table-wrap .num { text-align: right; }
.idx { color: #808288; }
.c-idx { width: 85px; }
.c-id { width: 286px; }
.c-hours { width: 196px; }
.c-time { width: 326px; }
.c-sev { width: 169px; }
.c-lat { width: 170px; }
.c-lon { width: 181px; }
.c-rad { width: 191px; }
.c-env { width: 190px; }
.c-conf { width: 188px; }
.c-pri { width: 168px; }
```
